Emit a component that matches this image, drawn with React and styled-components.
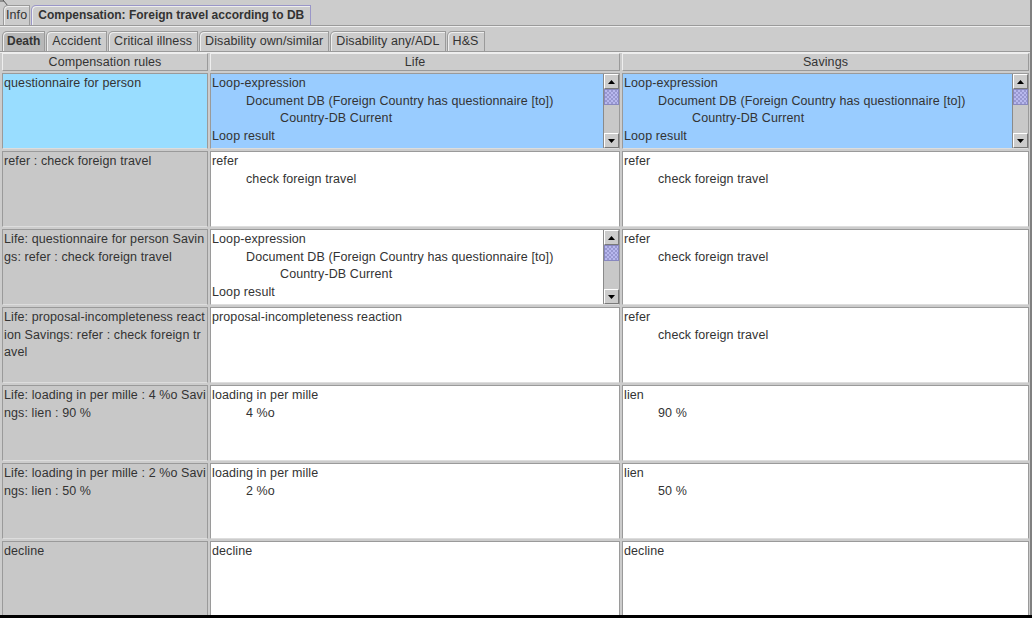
import styled, { createGlobalStyle } from 'styled-components';

const GlobalStyle = createGlobalStyle`
  html, body {
    margin: 0;
    padding: 0;
    background: #000;
    overflow: hidden;
  }
  body {
    font-family: "Liberation Sans", Arial, sans-serif;
    font-size: 12.5px;
    letter-spacing: 0.1px;
    color: #333;
  }
`

const Frame = styled.div`
  position: relative;
  width: 1030px;
  height: 615px;
  background: #cccccc;
  border-right: 2px solid #808080;
  overflow: hidden;
`

const Grip = styled.svg`
  position: absolute;
  left: 0;
  top: 0;
`

const TabStrip = styled.div`
  display: flex;
  align-items: flex-end;
  gap: 1px;
  height: ${p => p.$height}px;
  padding: 0 0 0 ${p => p.$left}px;
  border-bottom: 1px solid #9a9a9a;
  box-shadow: 0 1px 0 #eeeeee;
`

const Tab = styled.div`
  position: relative;
  height: 19px;
  line-height: 18px;
  padding: 0 ${p => p.$pad || 4}px;
  background: ${p => (p.$active ? '#b8b8b8' : '#cccccc')};
  border: 1px solid ${p => (p.$focus ? '#9a96c8' : '#9a9a9a')};
  border-bottom: none;
  border-top-left-radius: 5px;
  font-weight: ${p => (p.$bold ? 'bold' : 'normal')};
  font-size: ${p => (p.$bold ? '12px' : '12.5px')};
  letter-spacing: ${p => (p.$bold ? '0' : '0.1px')};
  color: #333;
  white-space: nowrap;
  box-shadow: inset 1px 1px 0 #eeeeee;
`

const Table = styled.div`
  display: grid;
  grid-template-columns: 206px 410px 407px;
  grid-template-rows: 18px;
  grid-auto-rows: 76px;
  column-gap: 2px;
  row-gap: 2px;
  padding: 0 0 0 2px;
  margin-top: 1px;
`

const HeaderCell = styled.div`
  box-sizing: border-box;
  height: 18px;
  line-height: 16px;
  text-align: center;
  background: #cccccc;
  border: 1px solid #9a9a9a;
  border-top-color: #eeeeee;
  border-left-color: #eeeeee;
  color: #333;
`

const RowGroup = styled.div`
  display: contents;
`

const Cell = styled.div`
  position: relative;
  box-sizing: border-box;
  height: 76px;
  padding: 1px 1px;
  line-height: 17.5px;
  background: ${p => p.$bg};
  border: 1px solid #9a9a9a;
  border-bottom-color: #dddddd;
  overflow: hidden;
  white-space: ${p => (p.$wrap ? 'normal' : 'nowrap')};
  word-break: ${p => (p.$wrap ? 'break-all' : 'normal')};
`

const Line = styled.div`
  padding-left: ${p => (p.$indent || 0) * 34}px;
`

const Scroll = styled.div`
  position: absolute;
  right: 0;
  top: 0;
  bottom: 0;
  width: 15px;
  display: flex;
  flex-direction: column;
  background: #c8c8c8;
  border-left: 1px solid #8a8a8a;
`

const ScrollBtn = styled.div`
  height: 15px;
  display: flex;
  align-items: center;
  justify-content: center;
  background: #cccccc;
  border: 1px solid #ffffff;
  border-right-color: #7a7a7a;
  border-bottom-color: #7a7a7a;
  box-sizing: border-box;
`

const Thumb = styled.div`
  height: 16px;
  background-color: #a8a8e0;
  background-image: repeating-conic-gradient(#9898d0 0% 25%, #b8b8ee 0% 50%);
  background-size: 4px 4px;
  border: 1px solid #8888c0;
  box-sizing: border-box;
`

const Track = styled.div`
  flex: 1;
`

function Arrow({ up }) {
  return (
    <svg width="7" height="4" viewBox="0 0 7 4">
      <path d={up ? 'M0 4 L3.5 0 L7 4 Z' : 'M0 0 L3.5 4 L7 0 Z'} fill="#000" />
    </svg>
  )
}

function ScrollBar() {
  return (
    <Scroll>
      <ScrollBtn><Arrow up /></ScrollBtn>
      <Thumb />
      <Track />
      <ScrollBtn><Arrow /></ScrollBtn>
    </Scroll>
  )
}

const loopLines = [
  ['Loop-expression', 0],
  ['Document DB (Foreign Country has questionnaire [to])', 1],
  ['Country-DB Current', 2],
  ['Loop result', 0],
]

const refer = [['refer', 0], ['check foreign travel', 1]]

const rows = [
  { rule: 'questionnaire for person', life: loopLines, savings: loopLines, selected: true, lifeScroll: true, savScroll: true },
  { rule: 'refer : check foreign travel', life: refer, savings: refer },
  { rule: 'Life: questionnaire for person Savings: refer : check foreign travel', life: loopLines, savings: refer, lifeScroll: true },
  { rule: 'Life: proposal-incompleteness reaction Savings: refer : check foreign travel', life: [['proposal-incompleteness reaction', 0]], savings: refer },
  { rule: 'Life: loading in per mille : 4 %o Savings: lien : 90 %', life: [['loading in per mille', 0], ['4 %o', 1]], savings: [['lien', 0], ['90 %', 1]] },
  { rule: 'Life: loading in per mille : 2 %o Savings: lien : 50 %', life: [['loading in per mille', 0], ['2 %o', 1]], savings: [['lien', 0], ['50 %', 1]] },
  { rule: 'decline', life: [['decline', 0]], savings: [['decline', 0]] },
]

const topTabs = ['Info', 'Compensation: Foreign travel according to DB']
const subTabs = ['Death', 'Accident', 'Critical illness', 'Disability own/similar', 'Disability any/ADL', 'H&S']

function Lines({ items }) {
  return items.map(([text, indent], i) => (
    <Line key={i} $indent={indent}>{text}</Line>
  ))
}

export default function App() {
  return (
    <Frame>
      <GlobalStyle />
      <Grip width="10" height="8" viewBox="0 0 10 8">
        <path d="M0 1 L4 1 M3 0 L8 6" stroke="#555" strokeWidth="1" fill="none" />
      </Grip>
      <TabStrip $height={25} $left={3}>
        {topTabs.map((t, i) => (
          <Tab key={t} $bold={i === 1} $focus={i === 1} $pad={i === 1 ? 6 : 2}>{t}</Tab>
        ))}
      </TabStrip>
      <TabStrip $height={25} $left={2}>
        {subTabs.map((t, i) => (
          <Tab key={t} $active={i === 0} $bold={i === 0} $pad={i === 0 ? 4 : 5}>{t}</Tab>
        ))}
      </TabStrip>
      <Table>
        <RowGroup>
          <HeaderCell>Compensation rules</HeaderCell>
          <HeaderCell>Life</HeaderCell>
          <HeaderCell>Savings</HeaderCell>
        </RowGroup>
        {rows.map((r, i) => (
          <RowGroup key={i}>
            <Cell $bg={r.selected ? '#99ddff' : '#c8c8c8'} $wrap>{r.rule}</Cell>
            <Cell $bg={r.selected ? '#99ccff' : '#ffffff'}>
              <Lines items={r.life} />
              {r.lifeScroll && <ScrollBar />}
            </Cell>
            <Cell $bg={r.selected ? '#99ccff' : '#ffffff'}>
              <Lines items={r.savings} />
              {r.savScroll && <ScrollBar />}
            </Cell>
          </RowGroup>
        ))}
      </Table>
    </Frame>
  )
}
